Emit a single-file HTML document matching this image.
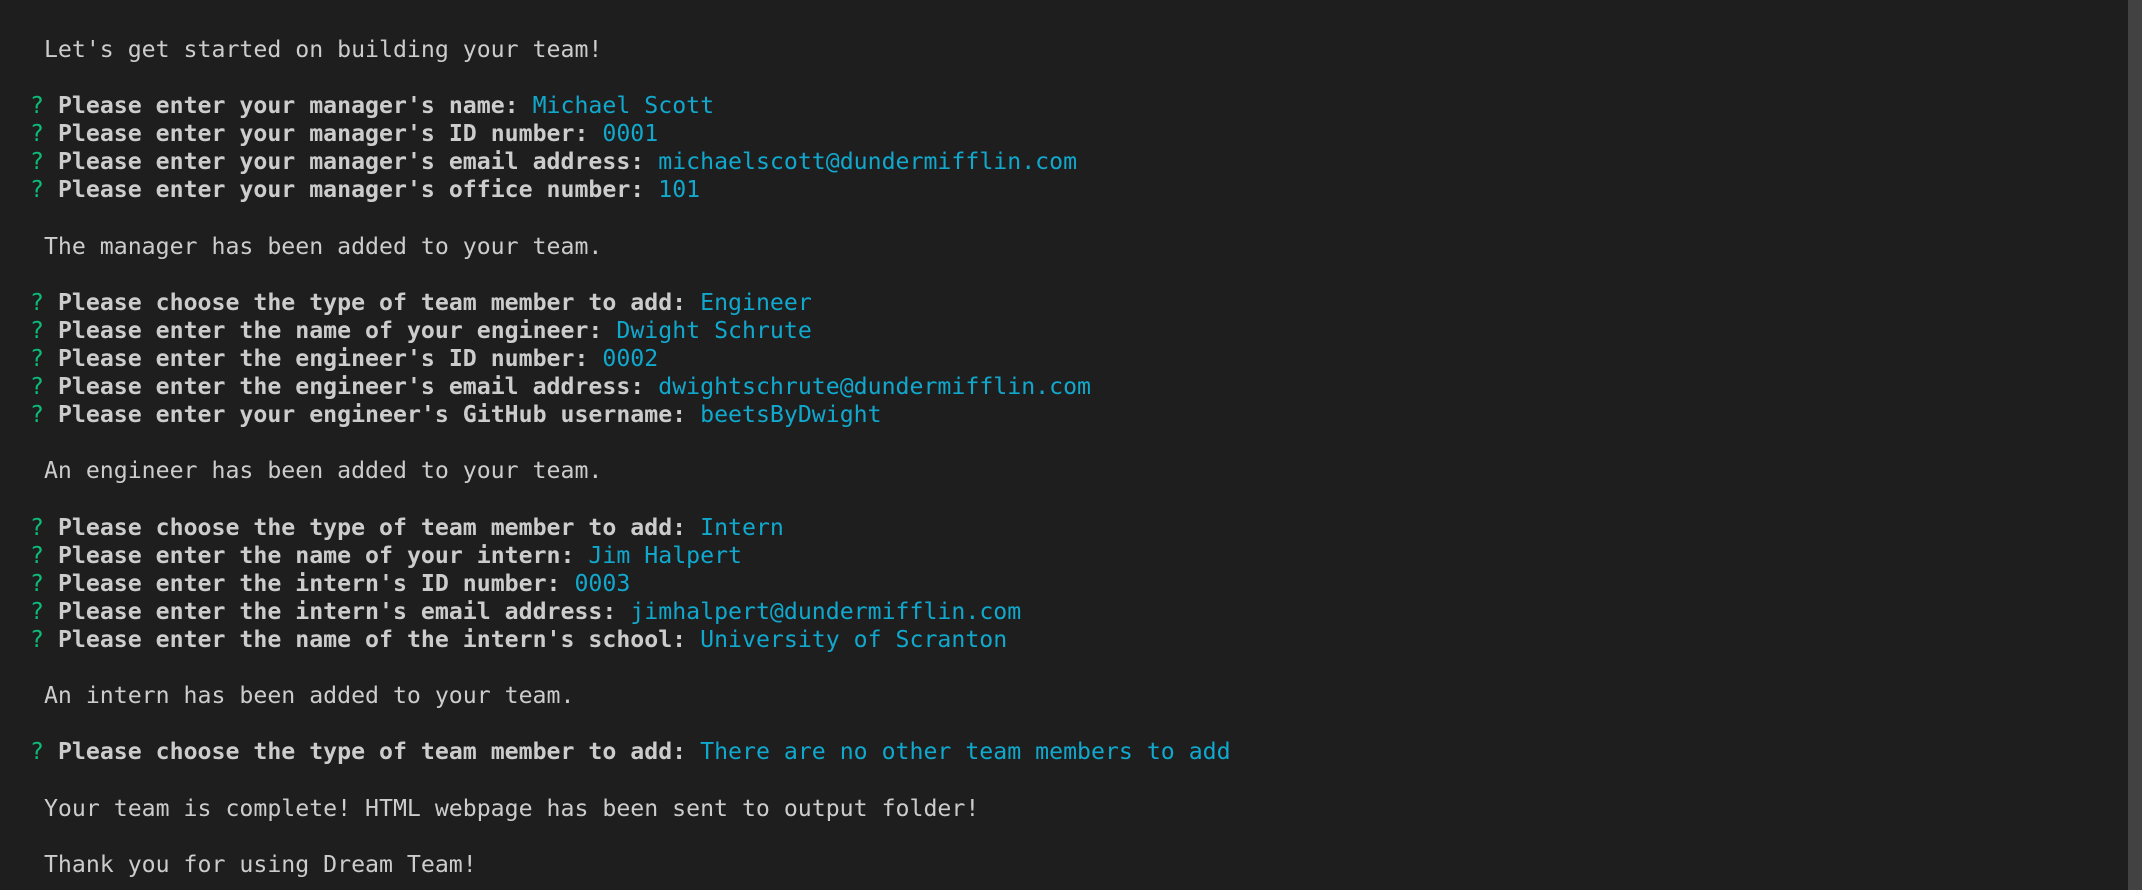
<!DOCTYPE html>
<html><head><meta charset="utf-8"><style>
html,body{margin:0;padding:0;}
body{width:2142px;height:890px;background:#1e1e1e;overflow:hidden;position:relative;}
pre{margin:0;position:absolute;left:30px;top:36px;font-family:"DejaVu Sans Mono","Liberation Mono",monospace;font-size:23.2px;line-height:28.1px;color:#cccccc;white-space:pre;}
.g{color:#0dbc79;}
.b{font-weight:bold;color:#cccccc;}
.c{color:#11a8cd;}
.sb{position:absolute;right:0;top:0;width:14px;height:890px;background:#424242;}
</style></head><body>
<pre> Let's get started on building your team!

<span class="g">?</span> <span class="b">Please enter your manager's name:</span> <span class="c">Michael Scott</span>
<span class="g">?</span> <span class="b">Please enter your manager's ID number:</span> <span class="c">0001</span>
<span class="g">?</span> <span class="b">Please enter your manager's email address:</span> <span class="c">michaelscott@dundermifflin.com</span>
<span class="g">?</span> <span class="b">Please enter your manager's office number:</span> <span class="c">101</span>

 The manager has been added to your team.

<span class="g">?</span> <span class="b">Please choose the type of team member to add:</span> <span class="c">Engineer</span>
<span class="g">?</span> <span class="b">Please enter the name of your engineer:</span> <span class="c">Dwight Schrute</span>
<span class="g">?</span> <span class="b">Please enter the engineer's ID number:</span> <span class="c">0002</span>
<span class="g">?</span> <span class="b">Please enter the engineer's email address:</span> <span class="c">dwightschrute@dundermifflin.com</span>
<span class="g">?</span> <span class="b">Please enter your engineer's GitHub username:</span> <span class="c">beetsByDwight</span>

 An engineer has been added to your team.

<span class="g">?</span> <span class="b">Please choose the type of team member to add:</span> <span class="c">Intern</span>
<span class="g">?</span> <span class="b">Please enter the name of your intern:</span> <span class="c">Jim Halpert</span>
<span class="g">?</span> <span class="b">Please enter the intern's ID number:</span> <span class="c">0003</span>
<span class="g">?</span> <span class="b">Please enter the intern's email address:</span> <span class="c">jimhalpert@dundermifflin.com</span>
<span class="g">?</span> <span class="b">Please enter the name of the intern's school:</span> <span class="c">University of Scranton</span>

 An intern has been added to your team.

<span class="g">?</span> <span class="b">Please choose the type of team member to add:</span> <span class="c">There are no other team members to add</span>

 Your team is complete! HTML webpage has been sent to output folder!

 Thank you for using Dream Team!</pre>
<div class="sb"></div>
</body></html>
